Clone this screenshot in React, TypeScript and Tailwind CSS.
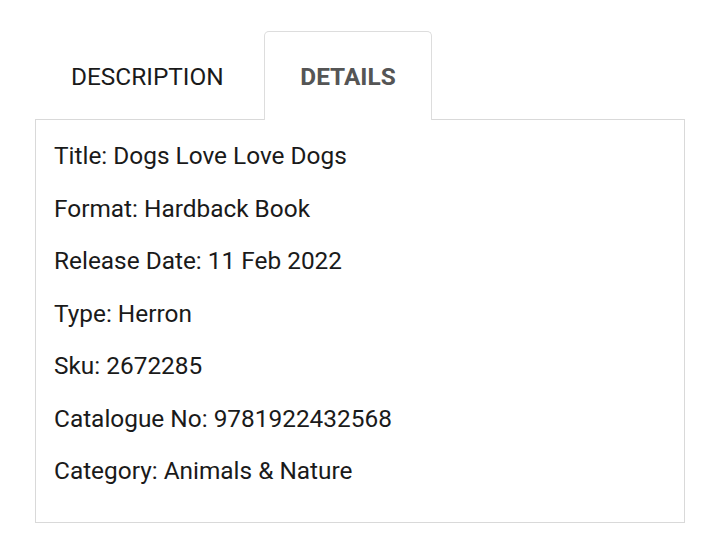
const details = [
    ["Title", "Dogs Love Love Dogs"],
    ["Format", "Hardback Book"],
    ["Release Date", "11 Feb 2022"],
    ["Type", "Herron"],
    ["Sku", "2672285"],
    ["Catalogue No", "9781922432568"],
    ["Category", "Animals & Nature"],
];

export default function App() {
    return (
        <div className="w-[717px] h-[555px] bg-white pt-[31px] pl-[35px] font-['Roboto',sans-serif]">
            {/* Tabs */}
            <div className="flex items-end">
                <button className="h-[88px] w-[229px] pl-[36px] pt-[4px] text-left text-[24.4px] text-[#1a1a1a] uppercase">
                    Description
                </button>
                <button className="relative z-10 -mb-px h-[89px] w-[168px] rounded-t-[5px] border border-b-0 border-[#dddddd] bg-white pt-[3px] text-center text-[24.4px] font-bold text-[#555555] uppercase">
                    Details
                </button>
            </div>

            {/* Panel */}
            <div className="w-[650px] border border-[#d9d9d9] pl-[18px] pt-[19px] pb-[35px]">
                <div className="flex flex-col gap-[19.5px]">
                    {details.map(([label, value]) => (
                        <p key={label} className="text-[24.4px] leading-[33px] text-[#1a1a1a]">
                            {label}: {value}
                        </p>
                    ))}
                </div>
            </div>
        </div>
    );
}
